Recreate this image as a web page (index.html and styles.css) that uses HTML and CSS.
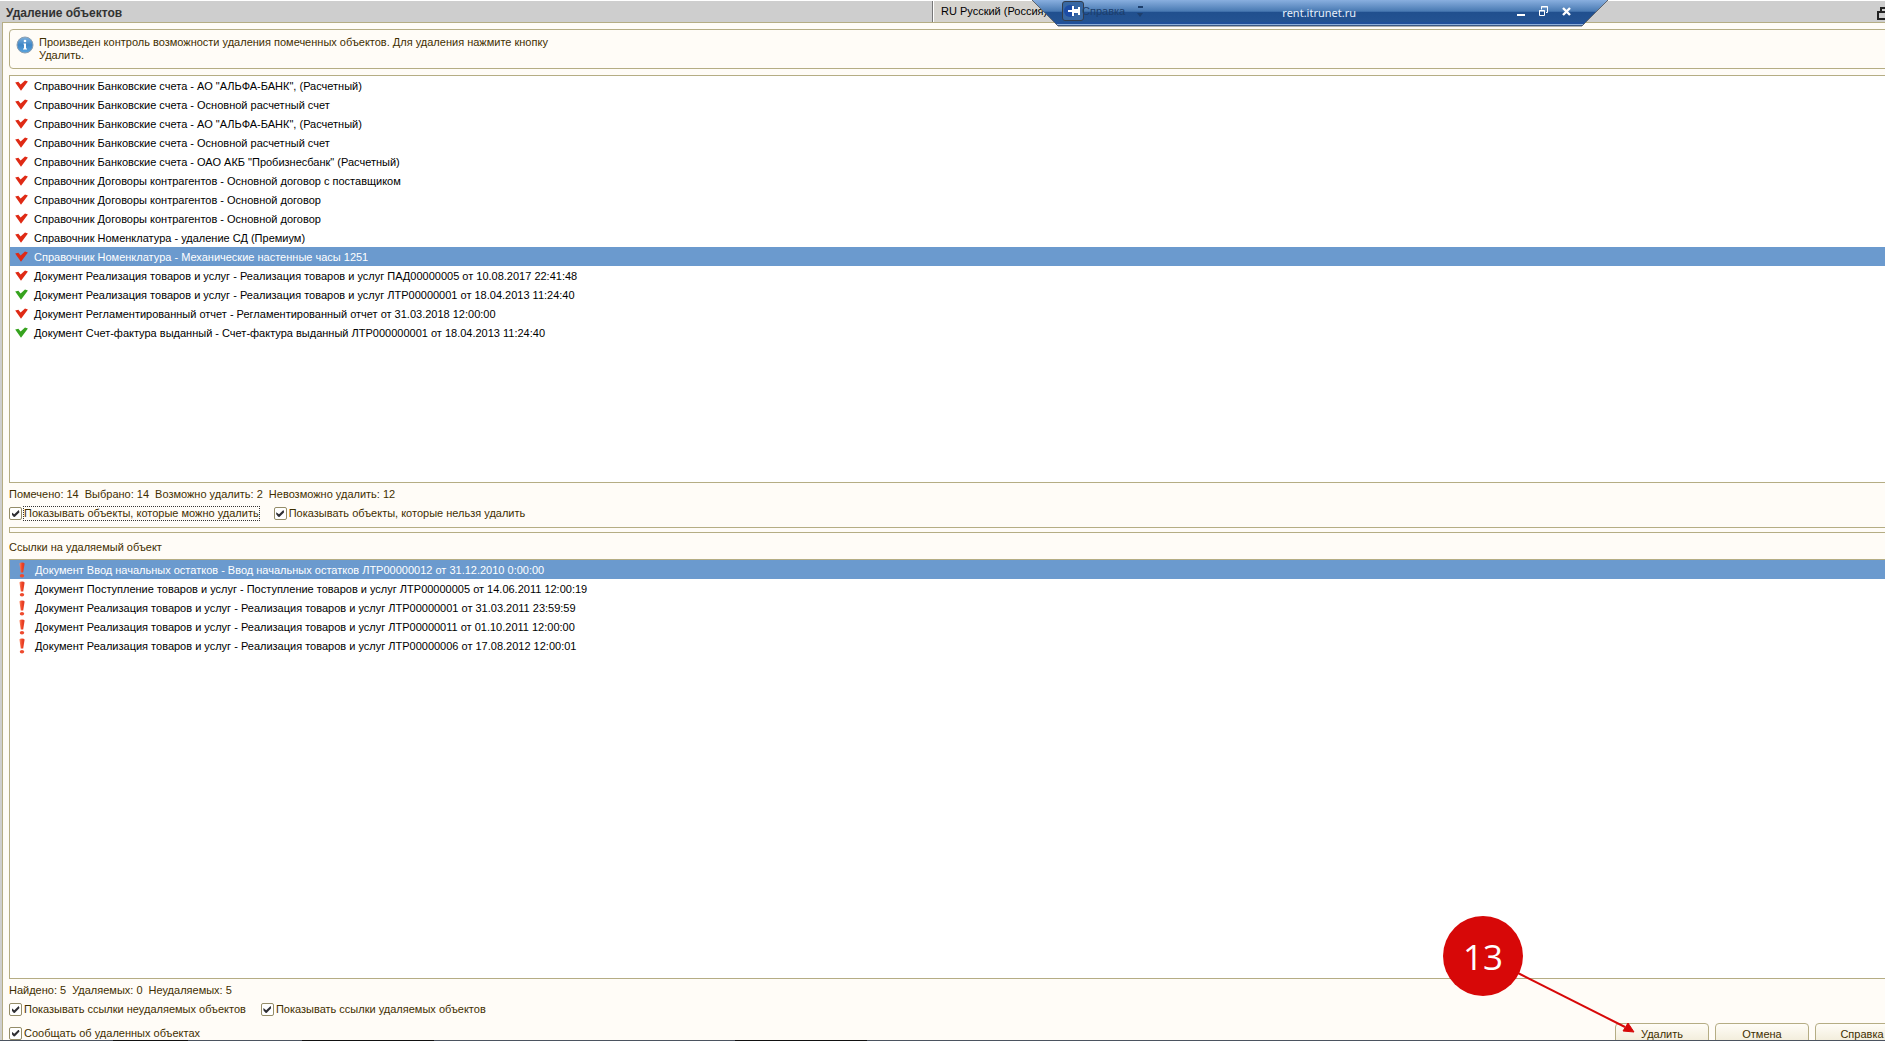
FILE: index.html
```html
<!DOCTYPE html>
<html lang="ru">
<head>
<meta charset="utf-8">
<title>Удаление объектов</title>
<link rel="stylesheet" href="styles.css">
</head>
<body>
<svg class="defs" aria-hidden="true">
  <defs>
    <symbol id="check" viewBox="0 0 13 11">
      <path d="M.2 2.600 3.400 1.800 5.600 4.400 10 .4 12.900 1.400 6 10.800Z"/>
    </symbol>
    <linearGradient id="bang-fill" x1="0" x2="1" y1="0" y2="0">
      <stop offset="0" stop-color="#ff8a66"/><stop offset=".5" stop-color="#ee4224"/><stop offset="1" stop-color="#dc3a26"/>
    </linearGradient>
    <symbol id="bang" viewBox="0 0 6 16">
      <path fill="url(#bang-fill)" d="M.4 1.600Q.8.4 3 .4T5.600 1.600L4.200 10.400H1.800Z"/>
      <ellipse cx="3" cy="13.800" rx="2.200" ry="1.700" fill="#ee4a2e"/>
    </symbol>
  </defs>
</svg>

<header class="titlebar">
  <h1 class="title">Удаление объектов</h1>
  <div class="langbar">
    <span class="lang">RU Русский (Россия)</span>
  </div>
  <div class="window-tools">
    <svg width="16" height="13" viewBox="0 0 16 13" fill="none" stroke="#222"><path d="M4 4V1h10v7h-3" stroke-width="2"/><path d="M1 5h10v7H1z" stroke-width="2"/></svg>
  </div>
</header>

<div class="rdp">
  <svg class="rdp-shape" viewBox="0 0 576 27" preserveAspectRatio="none" aria-hidden="true">
    <defs>
      <linearGradient id="rdp-fill" x1="0" x2="0" y1="0" y2="1">
        <stop offset="0" stop-color="#89afdf"/><stop offset=".44" stop-color="#4879b2"/>
        <stop offset=".45" stop-color="#204f8e"/><stop offset=".85" stop-color="#245392"/><stop offset=".86" stop-color="#21509a"/><stop offset="1" stop-color="#21509a"/>
      </linearGradient>
    </defs>
    <path d="M0 0H576L550 26H26Z" fill="url(#rdp-fill)"/>
    <path d="M25 24.5H551" stroke="#8fb0dc"/>
    <path d="M0 0 26 26H550L576 0" fill="none" stroke="#5d646e"/>
  </svg>
  <button class="pin" aria-label="Закрепить">
    <svg width="20" height="18" viewBox="0 0 20 18"><circle cx="7" cy="9" r="6" fill="#1d4da5"/><path d="M5 9h5M10 4v10M16 5v8" stroke="#fff" stroke-width="2"/><path d="M10 7h6v4h-6z" fill="#fff"/></svg>
  </button>
  <span class="ghost">Справка</span>
  <svg class="ghost-menu" width="7" height="12" viewBox="0 0 7 12" fill="#1d3f6d"><path d="M1 0h5v2H1zM0 7h6L3 11z"/></svg>
  <span class="host">rent.itrunet.ru</span>
  <div class="rdp-buttons">
    <button aria-label="Свернуть"><svg width="11" height="11"><path d="M2 8h8v2H2z" fill="#fff"/></svg></button>
    <button aria-label="Восстановить"><svg width="11" height="11" viewBox="0 0 11 11" fill="none" stroke="#fff"><path d="M3.500 3.500V.5h6v6H8M3 1h7M1 5h6" /><path d="M1.500 4.500h5v5h-5z"/></svg></button>
    <button aria-label="Закрыть"><svg width="11" height="11" viewBox="0 0 11 11"><path d="m2 2 7 7M9 2 2 9" stroke="#fff" stroke-width="2.400"/></svg></button>
  </div>
</div>

<main class="window">
  <section class="info">
    <svg width="18" height="18" viewBox="0 0 18 18" aria-hidden="true">
      <defs><linearGradient id="info-fill" x1="0" x2="0" y1="0" y2="1"><stop offset="0" stop-color="#7fb2dd"/><stop offset=".5" stop-color="#3f86c6"/><stop offset="1" stop-color="#5ba6e0"/></linearGradient></defs>
      <circle cx="9" cy="9" r="8" fill="url(#info-fill)" stroke="#8d9fb0"/>
      <circle cx="9" cy="5" r="1.300" fill="#fff"/><path d="M7.500 7.500H10v5h1v1H7v-1h1v-4h-.5z" fill="#fff"/>
    </svg>
    <p>Произведен контроль возможности удаления помеченных объектов. Для удаления нажмите кнопку Удалить.</p>
  </section>

  <ul class="list list-objects">
    <li><svg class="mark red"><use href="#check"/></svg>Справочник Банковские счета - АО "АЛЬФА-БАНК", (Расчетный)</li>
    <li><svg class="mark red"><use href="#check"/></svg>Справочник Банковские счета - Основной расчетный счет</li>
    <li><svg class="mark red"><use href="#check"/></svg>Справочник Банковские счета - АО "АЛЬФА-БАНК", (Расчетный)</li>
    <li><svg class="mark red"><use href="#check"/></svg>Справочник Банковские счета - Основной расчетный счет</li>
    <li><svg class="mark red"><use href="#check"/></svg>Справочник Банковские счета - ОАО АКБ "Пробизнесбанк" (Расчетный)</li>
    <li><svg class="mark red"><use href="#check"/></svg>Справочник Договоры контрагентов - Основной договор с поставщиком</li>
    <li><svg class="mark red"><use href="#check"/></svg>Справочник Договоры контрагентов - Основной договор</li>
    <li><svg class="mark red"><use href="#check"/></svg>Справочник Договоры контрагентов - Основной договор</li>
    <li><svg class="mark red"><use href="#check"/></svg>Справочник Номенклатура - удаление СД (Премиум)</li>
    <li class="selected"><svg class="mark red"><use href="#check"/></svg>Справочник Номенклатура - Механические настенные часы 1251</li>
    <li><svg class="mark red"><use href="#check"/></svg>Документ Реализация товаров и услуг - Реализация товаров и услуг ПАД00000005 от 10.08.2017 22:41:48</li>
    <li><svg class="mark green"><use href="#check"/></svg>Документ Реализация товаров и услуг - Реализация товаров и услуг ЛТР00000001 от 18.04.2013 11:24:40</li>
    <li><svg class="mark red"><use href="#check"/></svg>Документ Регламентированный отчет - Регламентированный отчет от 31.03.2018 12:00:00</li>
    <li><svg class="mark green"><use href="#check"/></svg>Документ Счет-фактура выданный - Счет-фактура выданный ЛТР000000001 от 18.04.2013 11:24:40</li>
  </ul>

  <p class="summary"><span>Помечено: 14</span><span>Выбрано: 14</span><span>Возможно удалить: 2</span><span>Невозможно удалить: 12</span></p>
  <div class="options">
    <label><input type="checkbox" checked><span class="focused">Показывать объекты, которые можно удалить</span></label>
    <label><input type="checkbox" checked><span>Показывать объекты, которые нельзя удалить</span></label>
  </div>

  <div class="splitter"></div>

  <h2 class="caption">Ссылки на удаляемый объект</h2>
  <ul class="list list-links">
    <li class="selected"><svg class="bang"><use href="#bang"/></svg>Документ Ввод начальных остатков - Ввод начальных остатков ЛТР00000012 от 31.12.2010 0:00:00</li>
    <li><svg class="bang"><use href="#bang"/></svg>Документ Поступление товаров и услуг - Поступление товаров и услуг ЛТР00000005 от 14.06.2011 12:00:19</li>
    <li><svg class="bang"><use href="#bang"/></svg>Документ Реализация товаров и услуг - Реализация товаров и услуг ЛТР00000001 от 31.03.2011 23:59:59</li>
    <li><svg class="bang"><use href="#bang"/></svg>Документ Реализация товаров и услуг - Реализация товаров и услуг ЛТР00000011 от 01.10.2011 12:00:00</li>
    <li><svg class="bang"><use href="#bang"/></svg>Документ Реализация товаров и услуг - Реализация товаров и услуг ЛТР00000006 от 17.08.2012 12:00:01</li>
  </ul>

  <p class="summary"><span>Найдено: 5</span><span>Удаляемых: 0</span><span>Неудаляемых: 5</span></p>
  <div class="options">
    <label><input type="checkbox" checked><span>Показывать ссылки неудаляемых объектов</span></label>
    <label><input type="checkbox" checked><span>Показывать ссылки удаляемых объектов</span></label>
  </div>

  <footer class="footer">
    <label><input type="checkbox" checked><span>Сообщать об удаленных объектах</span></label>
    <div class="actions">
      <button>Удалить</button>
      <button>Отмена</button>
      <button>Справка</button>
    </div>
  </footer>
</main>
<div class="taskbar"></div>

<div class="callout">
  <svg width="200" height="126" viewBox="0 0 200 126" aria-hidden="true">
    <circle cx="40" cy="40" r="40" fill="#d70808"/>
    <path d="M75 57 182 111" stroke="#d70808" stroke-width="2"/>
    <path d="m191 116-11-1 5-8z" fill="#d70808" stroke="#d70808"/>
  </svg>
  <span class="callout-number">13</span>
</div>
</body>
</html>
```
FILE: styles.css
```css
* { box-sizing: border-box; }

body {
  display: flex;
  flex-direction: column;
  height: 100vh;
  margin: 0;
  overflow: hidden;
  position: relative;
  background: #cecece;
  color: #3f2f00;
  font: 11px/13px "Liberation Sans", Arial, sans-serif;
}

p, h1, h2, ul { margin: 0; padding: 0; }
button { font: inherit; padding: 0; }
.defs { position: absolute; width: 0; height: 0; }

/* Title bar */
.titlebar {
  display: grid;
  grid-template-columns: 932fr 161fr 792fr;
  flex: none;
  height: 22px;
  border-top: 1px solid #fff;
  color: #222;
}
.title { padding-left: 6px; font-size: 12px; line-height: 24px; font-weight: bold; color: #333; }
.langbar { padding-left: 8px; border-left: 1px solid #777; background: #d5d3ce; color: #000; line-height: 21px; white-space: nowrap; box-shadow: inset 1px 0 #fff; }
.window-tools { display: flex; justify-content: flex-end; align-items: center; margin-right: -8px; }

/* Remote session bar */
.rdp {
  position: absolute;
  top: 0;
  right: 277px;
  width: 576px;
  height: 27px;
  display: flex;
  align-items: flex-start;
  padding: 1px 36px 0 30px;
}
.rdp-shape { position: absolute; left: 0; top: 0; width: 100%; height: 100%; }
.rdp > :not(.rdp-shape) { position: relative; }
.pin { width: 22px; height: 20px; border: 1px solid #333d4c; border-radius: 3px; background: #3767a3; }
.pin svg { display: block; }
.ghost { margin-left: -2px; font-size: 11px; line-height: 21px; color: #1c3e6c; }
.ghost-menu { margin: 5px 0 0 12px; }
.host { margin-left: auto; font: 11px/24px "Noto Sans", "Open Sans", sans-serif; color: #e6effb; }
.rdp-buttons { display: flex; gap: 12px; margin-left: 159px; padding-top: 5px; }
.rdp-buttons button { width: 11px; height: 11px; border: 0; background: none; }
.rdp-buttons svg { display: block; }

/* Window body */
.window {
  display: flex;
  flex-direction: column;
  flex: 1;
  min-height: 0;
  margin: 0 -24px 0 2px;
  padding: 6px 0 0 6px;
  border: solid #b5ad84;
  border-width: 1px 0 0 1px;
  background: #fffcf7;
}
.info {
  display: flex;
  gap: 5px;
  flex: none;
  height: 40px;
  padding: 6px;
  border: 1px solid #b5ad84;
  border-radius: 4px;
}
.info p { max-width: 530px; }

.list {
  flex: 408 1 0;
  min-height: 0;
  overflow: hidden;
  list-style: none;
  border: 1px solid #b5ad84;
  background: #fff;
  color: #000;
}
.list-objects { margin-top: 6px; }
.list-links { flex-grow: 420; }
.list li { display: flex; align-items: center; height: 19px; padding: 2px 0 0 5px; white-space: nowrap; }
.list .selected { background: #6b9ace; color: #fff; }
.mark { width: 13px; height: 11px; margin: -2px 6px 0 0; }
.red { fill: #df2a15; }
.green { fill: #37a31f; }
.bang { width: 6px; height: 16px; margin: -2px 10px 0 4px; }

.summary { display: flex; gap: 6px; flex: none; margin-top: 5px; }
.options { display: flex; gap: 14px; flex: none; height: 15px; margin-top: 5px; }
label { display: flex; align-items: center; gap: 1px; }
label span { padding: 1px; line-height: 13px; }
.focused { outline: 1px dotted #333; outline-offset: -1px; }
input[type="checkbox"] {
  appearance: none;
  width: 13px;
  height: 13px;
  margin: 0;
  border: 1px solid #948c68;
  border-radius: 2px;
  background: #fff;
  display: grid;
  place-items: center;
}
input[type="checkbox"]:checked::before {
  content: "";
  width: 8px;
  height: 7px;
  background: #2f2f35;
  clip-path: polygon(0 30%, 35% 60%, 90% 0, 100% 30%, 40% 100%, 25% 95%, 0 60%);
}

.splitter { flex: none; height: 6px; margin-top: 6px; border: 1px solid #b5ad84; }
.caption { flex: none; margin: 8px 0 5px; font-size: 11px; font-weight: normal; }

.footer { display: flex; justify-content: space-between; flex: none; height: 17px; margin-top: 6px; }
.footer label { height: 20px; }
.actions { display: flex; gap: 6px; }
.actions button {
  width: 94px;
  height: 22px;
  border: 1px solid #b5ad84;
  border-radius: 4px;
  background: linear-gradient(#fffdf7, #f0ead6);
  color: #3f2f00;
}
.taskbar { position: relative; flex: none; height: 1px; background: linear-gradient(90deg, #4b5360 0 6%, #111 6% 10%, #4b5360 10% 16%, #111 16% 23%, #4b5360 23% 39%, #111 39% 46%, #4b5360 46%); }

/* Step callout */
.callout { position: absolute; right: 242px; bottom: 0; width: 200px; height: 125px; }
.callout svg { display: block; }
.callout-number {
  position: absolute;
  left: 0;
  top: 0;
  width: 80px;
  text-align: center;
  color: #fff;
  font: 35px/82px "Open Sans", "Noto Sans", sans-serif;
}
```
